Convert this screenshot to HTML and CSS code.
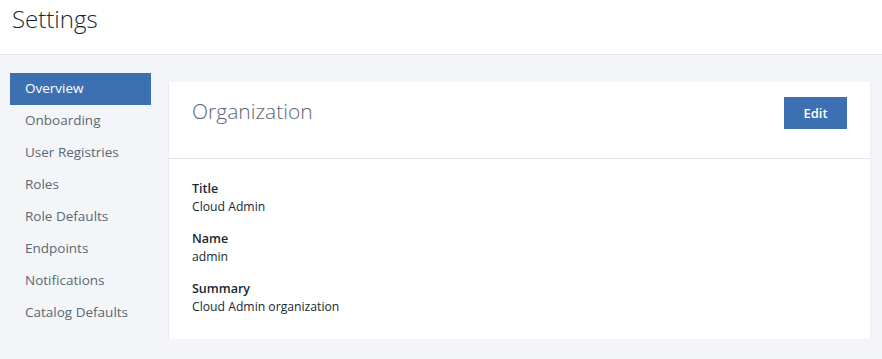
FILE: index.html
```html
<!DOCTYPE html>
<html lang="en">
<head>
  <meta charset="UTF-8" />
  <meta name="viewport" content="width=device-width, initial-scale=1.0"/>
  <title>Settings</title>
  <link rel="stylesheet" href="styles.css">
</head>
<body>

  <header class="page-header">
    <h1>Settings</h1>
  </header>

  <div class="layout">
    <nav class="side-nav">
      <a class="nav-item active" href="#">Overview</a>
      <a class="nav-item" href="#">Onboarding</a>
      <a class="nav-item" href="#">User Registries</a>
      <a class="nav-item" href="#">Roles</a>
      <a class="nav-item" href="#">Role Defaults</a>
      <a class="nav-item" href="#">Endpoints</a>
      <a class="nav-item" href="#">Notifications</a>
      <a class="nav-item" href="#">Catalog Defaults</a>
    </nav>

    <section class="card">
      <div class="card-header">
        <h2>Organization</h2>
        <button class="edit-btn">Edit</button>
      </div>
      <div class="card-body">
        <div class="field">
          <div class="field-label">Title</div>
          <div class="field-value">Cloud Admin</div>
        </div>
        <div class="field">
          <div class="field-label">Name</div>
          <div class="field-value">admin</div>
        </div>
        <div class="field">
          <div class="field-label">Summary</div>
          <div class="field-value">Cloud Admin organization</div>
        </div>
      </div>
    </section>
  </div>

</body>
</html>
```

FILE: styles.css
```css
body {
  font-family: "Open Sans", Arial, sans-serif;
  background: #f4f5f8;
  color: #152935;
  margin: 0;
  padding: 0;
}

.page-header {
  background: #fff;
  height: 55px;
  border-bottom: 1px solid #dfe3e6;
  padding: 0 12px;
  box-sizing: border-box;
}

.page-header h1 {
  margin: 0;
  padding-top: 3px;
  font-size: 24px;
  font-weight: 300;
  line-height: 32px;
  color: #152935;
}

.layout {
  display: flex;
  align-items: flex-start;
  padding: 18px 12px 0 10px;
}

.side-nav {
  width: 141px;
  flex-shrink: 0;
  display: flex;
  flex-direction: column;
}

.nav-item {
  display: block;
  height: 32px;
  line-height: 31px;
  padding-left: 15px;
  font-size: 13.5px;
  color: #5a6872;
  text-decoration: none;
  white-space: nowrap;
}

.nav-item.active {
  background: #3d70b2;
  color: #fff;
}

.card {
  flex: 1;
  margin-left: 18px;
  margin-top: 9px;
  background: #fff;
  box-shadow: 0 1px 2px rgba(0, 0, 0, 0.1);
}

.card-header {
  height: 76px;
  border-bottom: 1px solid #dfe3e6;
  display: flex;
  align-items: flex-start;
  justify-content: space-between;
  padding: 0 23px;
}

.card-header h2 {
  margin: 0;
  padding-top: 15px;
  font-size: 21px;
  font-weight: 300;
  line-height: 28px;
  color: #5a6872;
}

.edit-btn {
  margin-top: 15px;
  width: 63px;
  height: 32px;
  border: none;
  background: #3d70b2;
  color: #fff;
  font-family: inherit;
  font-size: 13px;
  font-weight: 600;
  cursor: pointer;
}

.card-body {
  padding: 21px 23px 23px;
}

.field + .field {
  margin-top: 14px;
}

.field-label {
  font-size: 12.5px;
  font-weight: 600;
  line-height: 18px;
  color: #152935;
}

.field-value {
  font-size: 12.2px;
  line-height: 18px;
  color: #152935;
}
```
